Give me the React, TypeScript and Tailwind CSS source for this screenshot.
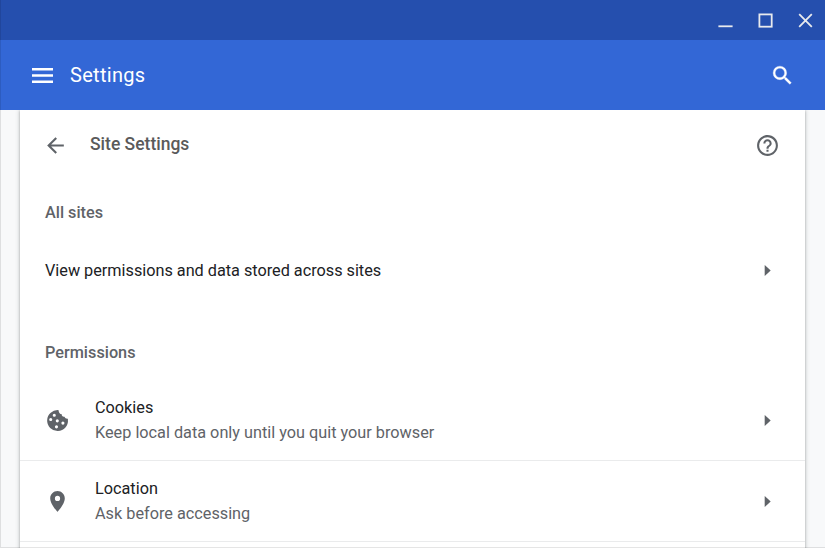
import React from "react";

const Caret = () => (
  <svg className="ml-auto h-[25px] w-[25px] shrink-0" viewBox="0 0 25 25" fill="#5f6368">
    <path d="M9.7 7v11l6-5.5z" />
  </svg>
);

function PermissionRow({ icon, title, detail }: { icon: string; title: string; detail: string }) {
  return (
    <div className="flex h-[81px] items-center border-b border-[#eaebec] pr-[25px] pl-[25px]">
      <svg className="h-[25px] w-[25px] shrink-0" viewBox="0 0 24 24" fill="#5f6368">
        <path d={icon} fillRule="evenodd" />
      </svg>
      <div className="ml-[25px] text-[16.25px] leading-[25px]">
        <div className="text-[#202124]">{title}</div>
        <div className="text-[#5f6368]">{detail}</div>
      </div>
      <Caret />
    </div>
  );
}

const COOKIE =
  "M13.1 2.1A10 10 0 1 0 22 11V10.2C20.6 10.5 19.2 9.8 18.7 8.4C17 8.7 15.9 7.6 16.1 6.1C14.2 5.9 13 4.1 13.1 2.1ZM8.9 5.5a1.5 1.5 0 1 1 0 3a1.5 1.5 0 0 1 0-3ZM5.5 9.5a1.5 1.5 0 1 1 0 3a1.5 1.5 0 0 1 0-3ZM11.8 10.8a1.5 1.5 0 1 1 0 3a1.5 1.5 0 0 1 0-3ZM17.2 13a1.5 1.5 0 1 1 0 3a1.5 1.5 0 0 1 0-3ZM11 16.6a1.5 1.5 0 1 1 0 3a1.5 1.5 0 0 1 0-3Z";
const PIN =
  "M12 2C8.13 2 5 5.13 5 9c0 5.25 7 13 7 13s7-7.75 7-13c0-3.87-3.13-7-7-7zm0 9.5a2.5 2.5 0 1 1 0-5 2.5 2.5 0 0 1 0 5z";

export default function App() {
  return (
    <div className="relative flex h-[548px] w-[825px] flex-col overflow-hidden bg-[#f8f9fa] font-['Roboto',sans-serif]">
      <div className="flex h-10 shrink-0 items-center justify-end bg-[#254fae]">
        <svg className="h-10 w-[120px]" viewBox="0 0 120 40" fill="none" stroke="#e8eaed" strokeWidth="1.8">
          <path d="M13.4 26.3h14.2" />
          <rect x="54.4" y="14.4" width="12.3" height="12.3" />
          <path d="M94.2 14.2l12.6 12.6M106.8 14.2l-12.6 12.6" />
        </svg>
      </div>
      <div className="flex h-[70px] shrink-0 items-center bg-[#3367d6] pr-[30px] pl-8 text-white">
        <svg className="h-[15px] w-[21px]" viewBox="0 0 21 15" fill="currentColor">
          <path d="M0 0h21v2.5H0zM0 6.25h21v2.5H0zM0 12.5h21V15H0z" />
        </svg>
        <div className="ml-[17px] text-[20px] leading-6 tracking-[0.3px]">Settings</div>
        <svg className="ml-auto h-[25px] w-[25px]" viewBox="0 0 24 24" fill="currentColor" stroke="currentColor" strokeWidth="0.3">
          <path d="M15.5 14h-.79l-.28-.27A6.47 6.47 0 0 0 16 9.5 6.5 6.5 0 1 0 9.5 16c1.61 0 3.09-.59 4.23-1.57l.27.28v.79l5 4.99L20.49 19l-4.99-5zm-6 0C7.01 14 5 11.99 5 9.5S7.01 5 9.5 5 14 7.01 14 9.5 11.99 14 9.5 14z" />
        </svg>
      </div>
      <div className="min-h-0 flex-1 overflow-hidden px-5">
        <div className="h-[460px] bg-white shadow-[0_1px_2px_rgba(60,64,67,0.3),0_1px_4px_1px_rgba(60,64,67,0.2)]">
          <div className="flex h-[70px] items-center pr-[25px] pl-[23px]">
            <svg className="h-[25px] w-[25px]" viewBox="0 0 24 24" fill="#5f6368">
              <path d="M20 11H7.83l5.59-5.59L12 4l-8 8 8 8 1.41-1.41L7.83 13H20v-2z" />
            </svg>
            <h1 className="ml-[22px] pb-0.5 text-[17.5px] leading-6 font-medium text-[#5a5a5a]">Site Settings</h1>
            <svg className="ml-auto h-[25px] w-[25px]" viewBox="0 0 24 24" fill="#5f6368">
              <path d="M11 18h2v-2h-2v2zm1-16C6.48 2 2 6.48 2 12s4.48 10 10 10 10-4.48 10-10S17.52 2 12 2zm0 18c-4.41 0-8-3.59-8-8s3.59-8 8-8 8 3.59 8 8-3.59 8-8 8zm0-14c-2.21 0-4 1.79-4 4h2c0-1.1.9-2 2-2s2 .9 2 2c0 2-3 1.75-3 5h2c0-2.25 3-2.5 3-5 0-2.21-1.79-4-4-4z" />
            </svg>
          </div>
          <h2 className="mt-5 px-[25px] text-[16.25px] leading-[25px] font-medium text-[#5f6368]">All sites</h2>
          <div className="mt-[15px] flex h-[60px] items-center px-[25px] text-[16.25px] leading-[25px] text-[#202124]">
            <span className="pt-px tracking-[-0.01px]">View permissions and data stored across sites</span>
            <Caret />
          </div>
          <h2 className="mt-10 px-[25px] text-[16.25px] leading-[25px] font-medium text-[#5f6368]">Permissions</h2>
          <div className="mt-[15px]">
            <PermissionRow icon={COOKIE} title="Cookies" detail="Keep local data only until you quit your browser" />
            <PermissionRow icon={PIN} title="Location" detail="Ask before accessing" />
          </div>
        </div>
      </div>
      <div className="pointer-events-none absolute inset-0 border-b border-l border-black/10" />
    </div>
  );
}
